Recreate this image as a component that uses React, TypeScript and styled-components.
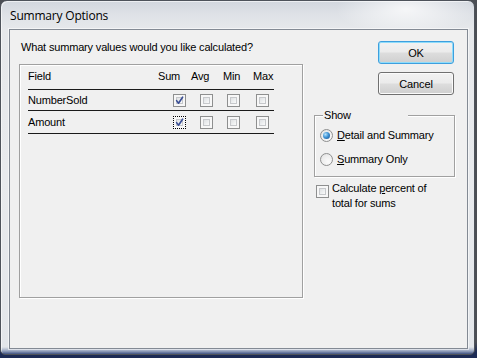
import React from "react";
import styled, { createGlobalStyle } from "styled-components";

const GlobalStyle = createGlobalStyle`
  html, body {
    margin: 0;
    padding: 0;
  }
  body {
    width: 477px;
    height: 358px;
    overflow: hidden;
    background: linear-gradient(180deg, #4b4e54 0px, #4b4e54 342px, #1c2b55 352px, #1c2b55 100%);
    font-family: "Liberation Sans", Arial, sans-serif;
    font-size: 11px;
    letter-spacing: -0.17px;
    color: #000;
  }
`;

const Window = styled.div`
  box-sizing: border-box;
  width: 475px;
  height: 355px;
  border: 1px solid #4e535b;
  border-radius: 7px 7px 5px 5px;
  padding: 0 6px 5px 8px;
  display: flex;
  flex-direction: column;
  background:
    radial-gradient(ellipse 70px 26px at 405px 8px, rgba(255, 255, 255, 0.75), rgba(255, 255, 255, 0)),
    linear-gradient(180deg, #d2d7de 0px, #dfe2e7 14px, #e6e8eb 28px, #e8eaed 50%, #e3e6ea calc(100% - 7px), #97a4bf calc(100% - 3px), #405383 100%);
  box-shadow: inset 1px 1px 0 rgba(255, 255, 255, 0.6);
`;

const TitleBar = styled.div`
  height: 28px;
  display: flex;
  align-items: center;
  padding-left: 1px;
  font-family: "Open Sans", "Noto Sans", sans-serif;
  font-size: 12px;
  color: #000;
  letter-spacing: -0.2px;
`;

const Client = styled.div`
  flex: 1;
  box-sizing: border-box;
  border: 1px solid #838a94;
  background: #f0f0f0;
  display: flex;
  gap: 11px;
  padding: 11px 0 0 9px;
  box-shadow: 0 0 0 1px rgba(255, 255, 255, 0.55);
`;

const LeftColumn = styled.div`
  display: flex;
  flex-direction: column;
  width: 284px;
`;

const Prompt = styled.div`
  height: 13px;
  line-height: 13px;
  margin-left: 2px;
`;

const FieldsBox = styled.div`
  box-sizing: border-box;
  margin-top: 10px;
  width: 284px;
  height: 234px;
  border: 1px solid #a0a0a0;
  box-shadow: 1px 1px 0 #ffffff, inset 1px 1px 0 #ffffff;
  padding: 1px 0 0 8px;
`;

const Table = styled.div`
  width: 246px;
  display: flex;
  flex-direction: column;
`;

const HeaderRow = styled.div`
  display: grid;
  grid-template-columns: 130px 33px 32px 30px 1fr;
  padding-top: 4px;
  height: 19px;
  line-height: 13px;
  border-bottom: 1px solid #1a1a1a;
`;

const DataRow = styled.div<{ $h: number }>`
  display: grid;
  grid-template-columns: 145px 27px 27px 29px 1fr;
  align-items: center;
  height: ${(p) => p.$h}px;
  line-height: 13px;
  border-bottom: 1px solid #1a1a1a;
`;

const FieldName = styled.div`
  margin-left: 0;
`;

const CheckBox = styled.span<{ $focused?: boolean }>`
  position: relative;
  display: inline-block;
  box-sizing: border-box;
  width: 13px;
  height: 13px;
  border: 1px ${(p) => (p.$focused ? "dotted #000" : "solid #8e8f8f")};
  background: #f7f7f7;
  &::before {
    content: "";
    position: absolute;
    left: 2px;
    top: 2px;
    right: 2px;
    bottom: 2px;
    box-sizing: border-box;
    border: 1px solid #c6c8cb;
    background: linear-gradient(135deg, #dfe1e3 0%, #eef0f1 60%, #fafafa 100%);
  }
  svg {
    position: absolute;
    left: -1px;
    top: -1px;
  }
`;

const RightColumn = styled.div`
  width: 141px;
  display: flex;
  flex-direction: column;
`;

const Button = styled.button<{ $default?: boolean }>`
  align-self: flex-end;
  margin-right: 1px;
  width: 76px;
  height: 23px;
  box-sizing: border-box;
  padding: 0;
  font-family: "Liberation Sans", Arial, sans-serif;
  font-size: 11px;
  letter-spacing: -0.1px;
  color: #000;
  border-radius: 3px;
  border: 1px solid ${(p) => (p.$default ? "#3d9fde" : "#707070")};
  background: linear-gradient(180deg, #f2f2f2 0%, #ebebeb 48%, #dddddd 52%, #cfcfcf 100%);
  box-shadow: inset 0 0 0 1px ${(p) => (p.$default ? "#8fdcfa" : "#fbfbfb")};
  & + & {
    margin-top: 8px;
  }
`;

const GroupBox = styled.div`
  position: relative;
  box-sizing: border-box;
  margin-top: 20px;
  width: 141px;
  height: 62px;
  border: 1px solid #a0a0a0;
  box-shadow: 1px 1px 0 #ffffff, inset 1px 1px 0 #ffffff;
  padding: 11px 0 0 5px;
  display: flex;
  flex-direction: column;
  gap: 8px;
`;

const Legend = styled.span`
  position: absolute;
  left: 8px;
  top: -8px;
  width: 84px;
  height: 14px;
  line-height: 14px;
  padding-left: 1px;
  background: #f0f0f0;
`;

const OptionRow = styled.label`
  display: flex;
  align-items: center;
  gap: 4px;
  height: 16px;
  line-height: 13px;
`;

const Radio = styled.span<{ $checked?: boolean }>`
  position: relative;
  display: inline-block;
  box-sizing: border-box;
  width: 13px;
  height: 13px;
  border-radius: 50%;
  border: 1px solid #8e8f8f;
  background: radial-gradient(circle at 65% 70%, #fbfbfb 0%, #ececec 60%, #dcdcdc 100%);
  &::after {
    content: "";
    display: ${(p) => (p.$checked ? "block" : "none")};
    position: absolute;
    left: 2px;
    top: 2px;
    width: 7px;
    height: 7px;
    border-radius: 50%;
    background: radial-gradient(circle at 35% 35%, #b5e2fb 0%, #3f94d6 45%, #164a86 100%);
  }
`;

const CheckRow = styled.div`
  display: flex;
  align-items: flex-start;
  gap: 3px;
  margin-top: 4px;
  margin-left: 2px;
  line-height: 15px;
  white-space: nowrap;
  > span:first-child {
    margin-top: 4px;
    flex: none;
  }
`;

const Check = () => (
  <svg width="13" height="13" viewBox="0 0 13 13">
    <path d="M3.6 6.6 L5.5 9.2 L9.6 3.2" fill="none" stroke="#3b4f95" strokeWidth="1.6" strokeLinecap="round" strokeLinejoin="round" />
  </svg>
);

const Box = ({ checked, focused }: { checked?: boolean; focused?: boolean }) => (
  <CheckBox $focused={focused}>{checked && <Check />}</CheckBox>
);

const rows = [
  { name: "NumberSold", h: 20, focused: false },
  { name: "Amount", h: 22, focused: true },
];

export default function App() {
  return (
    <>
      <GlobalStyle />
      <Window>
        <TitleBar>Summary Options</TitleBar>
        <Client>
          <LeftColumn>
            <Prompt>What summary values would you like calculated?</Prompt>
            <FieldsBox>
              <Table>
                <HeaderRow>
                  <div>Field</div>
                  <div>Sum</div>
                  <div>Avg</div>
                  <div>Min</div>
                  <div>Max</div>
                </HeaderRow>
                {rows.map((r) => (
                  <DataRow key={r.name} $h={r.h}>
                    <FieldName>{r.name}</FieldName>
                    <Box checked focused={r.focused} />
                    <Box />
                    <Box />
                    <Box />
                  </DataRow>
                ))}
              </Table>
            </FieldsBox>
          </LeftColumn>
          <RightColumn>
            <Button $default>OK</Button>
            <Button>Cancel</Button>
            <GroupBox>
              <Legend>Show</Legend>
              <OptionRow>
                <Radio $checked />
                <span>
                  <u>D</u>etail and Summary
                </span>
              </OptionRow>
              <OptionRow>
                <Radio />
                <span>
                  <u>S</u>ummary Only
                </span>
              </OptionRow>
            </GroupBox>
            <CheckRow>
              <Box />
              <span>
                Calculate <u>p</u>ercent of
                <br />
                total for sums
              </span>
            </CheckRow>
          </RightColumn>
        </Client>
      </Window>
    </>
  );
}
